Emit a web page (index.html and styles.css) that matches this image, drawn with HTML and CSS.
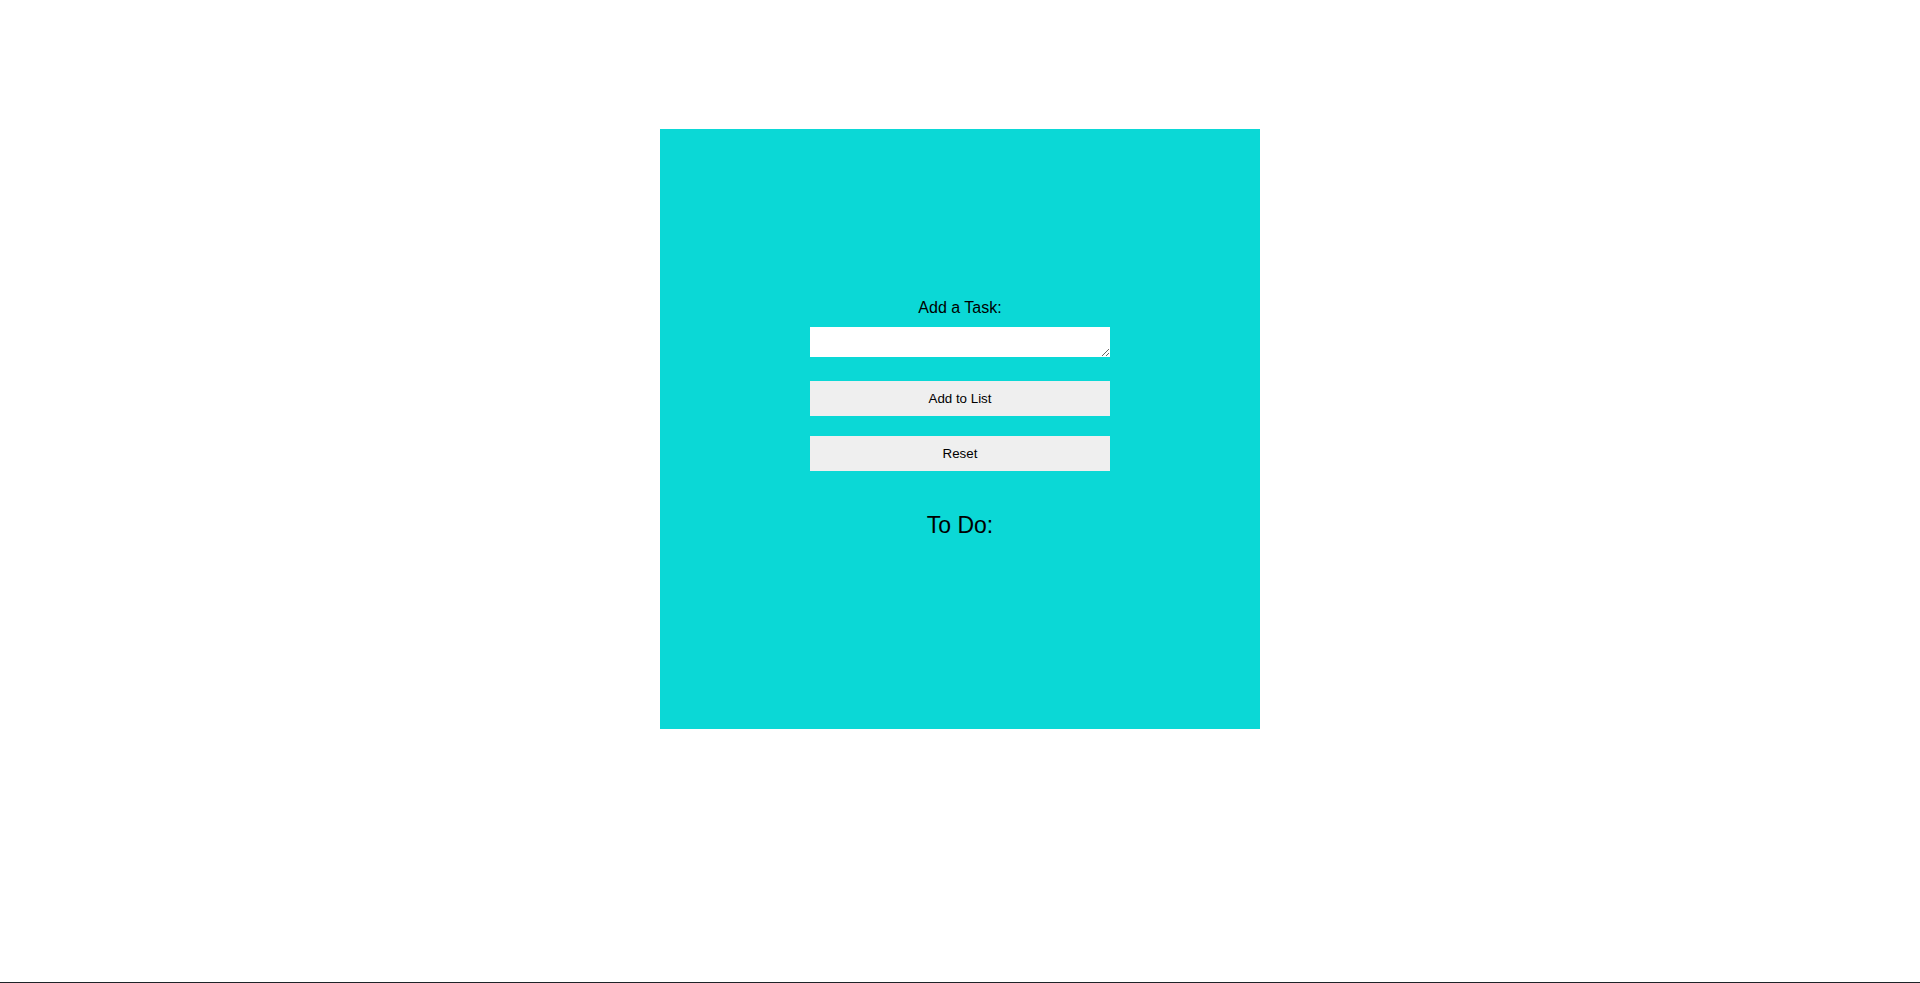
FILE: index.html
```html
<!DOCTYPE html>
<html lang="en">
<head>
<meta charset="utf-8">
<title>To Do</title>
<link rel="stylesheet" href="styles.css">
</head>
<body>
<div class="page">
  <main class="card">
    <label class="task-label" for="task">Add a Task:</label>
    <textarea id="task" class="task-input"></textarea>
    <button class="btn btn-add" type="button">Add to List</button>
    <button class="btn btn-reset" type="button">Reset</button>
    <h2 class="todo-title">To Do:</h2>
    <ul class="todo-list"></ul>
  </main>
</div>
<div class="bottom-line"></div>
</body>
</html>
```
FILE: styles.css
```css
html, body {
  margin: 0;
  padding: 0;
  height: 983px;
  overflow: hidden;
  background: #ffffff;
  font-family: "Liberation Sans", Arial, sans-serif;
}

body {
  display: flex;
  flex-direction: column;
}

.page {
  flex: 1;
  padding-top: 129px;
}

.card {
  width: 600px;
  height: 600px;
  margin: 0 auto;
  background: #0bd8d6;
  display: flex;
  flex-direction: column;
  align-items: center;
  padding-top: 170px;
  box-sizing: border-box;
}

.task-label {
  font-size: 16px;
  line-height: 18px;
  color: #000;
}

.task-input {
  display: block;
  width: 300px;
  height: 30px;
  margin-top: 10px;
  border: none;
  padding: 2px;
  box-sizing: border-box;
  background: #fff;
  font-family: "Liberation Mono", monospace;
  font-size: 13px;
}

.btn {
  display: block;
  width: 300px;
  height: 35px;
  border: none;
  background: #efefef;
  color: #000;
  font-family: "Liberation Sans", Arial, sans-serif;
  font-size: 13.33px;
  padding: 0;
}

.btn-add {
  margin-top: 24px;
}

.btn-reset {
  margin-top: 20px;
}

.todo-title {
  margin: 41px 0 0;
  font-size: 23px;
  font-weight: normal;
  line-height: 26px;
  color: #000;
}

.todo-list {
  margin: 0;
  padding: 0;
  list-style: none;
}

.bottom-line {
  height: 1px;
  background: #1e2328;
}
```
